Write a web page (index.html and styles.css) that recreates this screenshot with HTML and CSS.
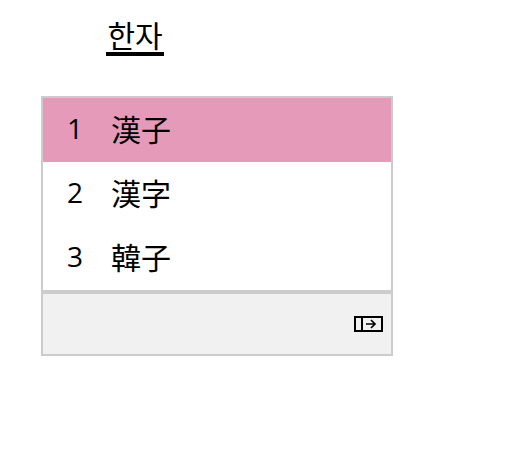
FILE: index.html
```html
<!DOCTYPE html>
<html lang="ko">
<head>
<meta charset="utf-8">
<title>한자</title>
<link rel="stylesheet" href="styles.css">
</head>
<body>
<div class="composition"><span class="composition-text">한자</span></div>
<div class="panel">
  <ul class="list">
    <li class="row selected"><span class="num">1</span><span class="cand" lang="ja">漢子</span></li>
    <li class="row"><span class="num">2</span><span class="cand" lang="ja">漢字</span></li>
    <li class="row"><span class="num">3</span><span class="cand" lang="ko">韓子</span></li>
  </ul>
  <div class="footer">
    <svg class="expand" width="29" height="16" viewBox="0 0 29 16" aria-hidden="true">
      <rect x="1" y="1" width="27" height="14" fill="none" stroke="#000" stroke-width="2"/>
      <path d="M8 1V15" stroke="#000" stroke-width="2" fill="none"/>
      <path d="M12 8H21M17 4L21 8L17 12" stroke="#000" stroke-width="1.7" fill="none"/>
    </svg>
  </div>
</div>
</body>
</html>
```

FILE: styles.css
```css
* { box-sizing: border-box; }
html, body { margin: 0; padding: 0; background: #fff; }
body {
  width: 513px;
  height: 462px;
  overflow: hidden;
  padding: 16px 0 0 41px;
  font-family: "Noto Sans CJK KR", "Noto Sans", sans-serif;
  color: #000;
}
.composition {
  height: 80px;
  padding-left: 65px;
}
.composition-text {
  display: inline-block;
  width: 58px;
  height: 40px;
  border-bottom: 4px solid #000;
  font-size: 30px;
  line-height: 36px;
  text-align: center;
  white-space: nowrap;
}
.panel {
  width: 352px;
  height: 260px;
  border: 2px solid #ccc;
  background: #fff;
  display: flex;
  flex-direction: column;
}
.list {
  list-style: none;
  margin: 0;
  padding: 0;
  height: 192px;
}
.row {
  height: 64px;
  display: flex;
  align-items: center;
  padding-bottom: 4px;
  font-size: 30px;
}
.selected { background: #e69ab9; }
.num {
  width: 68px;
  padding-left: 24px;
  font-family: "Open Sans", "Noto Sans", sans-serif;
  font-size: 28px;
  line-height: 40px;
}
.cand { white-space: nowrap; }
.footer {
  flex: 1;
  border-top: 4px solid #ccc;
  background: #f1f1f1;
  display: flex;
  align-items: center;
  justify-content: flex-end;
  padding-right: 8px;
}
```
